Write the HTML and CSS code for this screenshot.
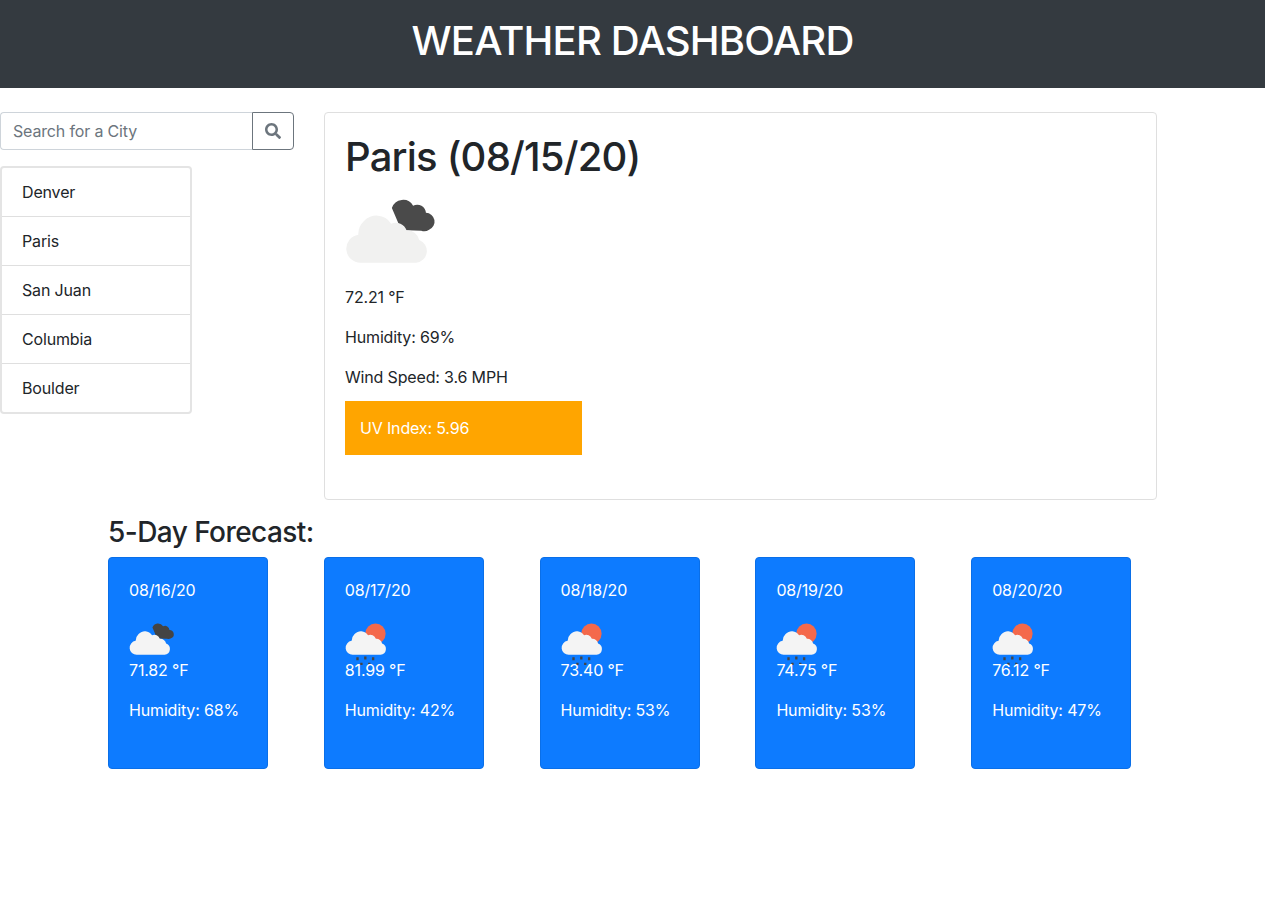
FILE: index.html
```html
<!DOCTYPE html>
<html lang="en">
<head>
<meta charset="utf-8">
<title>Weather Dashboard</title>
<link rel="stylesheet" href="styles.css">
</head>
<body>
<svg class="defs" width="0" height="0" aria-hidden="true">
  <defs>
    <path id="cloud-back" d="M30 12a7.5 7.5 0 0 1 13.6-1.5a5.6 5.6 0 0 1 8.2 4.6a5.6 5.6 0 0 1 2 10.800a5.500 5.500 0 0 1-5 .6L36 26z"/>
    <path id="cloud-front" d="M10 47a9 9 0 0 1-1.500-17.900a11.500 11.500 0 0 1 3.500-8.600a11 11 0 0 1 17.500 1.500a7.500 7.500 0 0 1 10 4.500a7.500 7.500 0 0 1 8 6a7.500 7.500 0 0 1-2 14.500z"/>
  </defs>
</svg>
<header class="banner"><h1>WEATHER DASHBOARD</h1></header>
<main class="top">
  <aside class="side">
    <form class="search">
      <input class="search-input" type="text" placeholder="Search for a City">
      <button class="search-btn" type="button" aria-label="Search">
        <svg viewBox="0 0 512 512" width="16" height="16"><path fill="#6c757d" d="M505 442.700L405.300 343c-4.500-4.500-10.600-7-17-7H372c27.600-35.300 44-79.700 44-128C416 93.100 322.900 0 208 0S0 93.100 0 208s93.100 208 208 208c48.300 0 92.700-16.400 128-44v16.300c0 6.400 2.500 12.500 7 17l99.700 99.700c9.400 9.400 24.600 9.400 33.900 0l28.300-28.300c9.400-9.400 9.400-24.600.1-34zM208 336c-70.700 0-128-57.200-128-128 0-70.700 57.200-128 128-128 70.700 0 128 57.200 128 128 0 70.700-57.200 128-128 128z"/></svg>
      </button>
    </form>
    <ul class="cities">
      <li>Denver</li>
      <li>Paris</li>
      <li>San Juan</li>
      <li>Columbia</li>
      <li>Boulder</li>
    </ul>
  </aside>
  <section class="today">
    <h2>Paris (08/15/20)</h2>
    <svg class="icon-big" viewBox="0 0 64 56"><use href="#cloud-back" fill="#4a4a4a"/><use href="#cloud-front" fill="#f1f1f0" stroke="#fff" stroke-width="0"/></svg>
    <p>72.21 °F</p>
    <p>Humidity: 69%</p>
    <p>Wind Speed: 3.6 MPH</p>
    <div class="uv">UV Index: 5.96</div>
  </section>
</main>
<section class="forecast">
  <h3>5-Day Forecast:</h3>
  <div class="cards">
    <article class="card">
      <p class="date">08/16/20</p>
      <svg class="icon-small" viewBox="0 0 64 56"><use href="#cloud-back" fill="#444"/><use href="#cloud-front" fill="#f4f4f4"/></svg>
      <p>71.82 °F</p>
      <p>Humidity: 68%</p>
    </article>
    <article class="card">
      <p class="date">08/17/20</p>
      <svg class="icon-small" viewBox="0 0 64 56"><circle cx="39" cy="20" r="13" fill="#f4694b"/><use href="#cloud-front" fill="#f4f4f4" class="rain-cloud"/><path class="drops" d="M16 50v4M26 49v4M36 50v4M21 57v3M31 57v3"/></svg>
      <p>81.99 °F</p>
      <p>Humidity: 42%</p>
    </article>
    <article class="card">
      <p class="date">08/18/20</p>
      <svg class="icon-small" viewBox="0 0 64 56"><circle cx="39" cy="20" r="13" fill="#f4694b"/><use href="#cloud-front" fill="#f4f4f4" class="rain-cloud"/><path class="drops" d="M16 50v4M26 49v4M36 50v4M21 57v3M31 57v3"/></svg>
      <p>73.40 °F</p>
      <p>Humidity: 53%</p>
    </article>
    <article class="card">
      <p class="date">08/19/20</p>
      <svg class="icon-small" viewBox="0 0 64 56"><circle cx="39" cy="20" r="13" fill="#f4694b"/><use href="#cloud-front" fill="#f4f4f4" class="rain-cloud"/><path class="drops" d="M16 50v4M26 49v4M36 50v4M21 57v3M31 57v3"/></svg>
      <p>74.75 °F</p>
      <p>Humidity: 53%</p>
    </article>
    <article class="card">
      <p class="date">08/20/20</p>
      <svg class="icon-small" viewBox="0 0 64 56"><circle cx="39" cy="20" r="13" fill="#f4694b"/><use href="#cloud-front" fill="#f4f4f4" class="rain-cloud"/><path class="drops" d="M16 50v4M26 49v4M36 50v4M21 57v3M31 57v3"/></svg>
      <p>76.12 °F</p>
      <p>Humidity: 47%</p>
    </article>
  </div>
</section>
</body>
</html>
```
FILE: styles.css
```css
* { box-sizing: border-box; }
html, body { margin: 0; padding: 0; }
body {
  font-family: Inter, "Noto Sans", "Liberation Sans", sans-serif;
  font-size: 16px;
  line-height: 24px;
  color: #212529;
  background: #fff;
  letter-spacing: -0.01em;
}
.defs { position: absolute; }
p { margin: 0 0 16px; }

.banner {
  height: 88px;
  background: #343a40;
  color: #fff;
  display: flex;
  align-items: center;
  justify-content: center;
}
.banner h1 {
  margin: 0;
  font-size: 40px;
  line-height: 48px;
  font-weight: 500;
  letter-spacing: -0.02em;
  position: relative;
  top: -3px;
}

.top {
  display: flex;
  gap: 30px;
  padding-top: 24px;
  align-items: flex-start;
}
.side { width: 294px; flex: none; }
.search { display: flex; height: 38px; margin: 0 0 16px; }
.search-input {
  flex: 1;
  min-width: 0;
  border: 1px solid #ced4da;
  border-right: 0;
  border-radius: 4px 0 0 4px;
  padding: 6px 12px;
  font: inherit;
  letter-spacing: inherit;
  color: #495057;
  background: #fff;
}
.search-input::placeholder { color: #6c757d; opacity: 1; }
.search-btn {
  width: 42px;
  flex: none;
  padding: 0;
  background: #fff;
  border: 1px solid #6c757d;
  border-radius: 0 4px 4px 0;
  display: flex;
  align-items: center;
  justify-content: center;
}
.cities {
  list-style: none;
  margin: 0;
  padding: 0;
  width: 192px;
  border: 2px solid #e4e4e4;
  border-radius: 4px;
}
.cities li {
  height: 49px;
  padding: 12px 20px;
  border-bottom: 1px solid #dfdfdf;
}
.cities li:last-child { border-bottom: 0; height: 48px; }

.today {
  width: 833px;
  height: 388px;
  flex: none;
  border: 1px solid #dfdfdf;
  border-radius: 4px;
  padding: 20px;
}
.today h2 {
  margin: 0 0 8px;
  font-size: 40px;
  line-height: 48px;
  font-weight: 500;
  letter-spacing: -0.02em;
}
.icon-big { display: block; width: 100px; height: 88px; margin: 0 0 8px; }
.uv {
  width: 237px;
  height: 54px;
  margin-top: -4px;
  padding: 15px;
  background: #ffa500;
  color: #fff;
}

.forecast { padding: 16px 0 0 108px; }
.forecast h3 {
  margin: 0;
  font-size: 28px;
  line-height: 33px;
  font-weight: 500;
  letter-spacing: -0.02em;
}
.cards { display: flex; gap: 55.8px; margin-top: 8px; }
.card {
  width: 160px;
  height: 212px;
  flex: none;
  background: #0d7bff;
  border: 1px solid #0a6fe8;
  border-radius: 4px;
  color: #fff;
  padding: 20px;
}
.card .date { margin-bottom: 16px; }
.icon-small { display: block; width: 50px; height: 44px; margin: 0 0 -4px; overflow: visible; }
.drops { stroke: #444; stroke-width: 3; fill: none; }
.rain-cloud { transform: none; }
```
